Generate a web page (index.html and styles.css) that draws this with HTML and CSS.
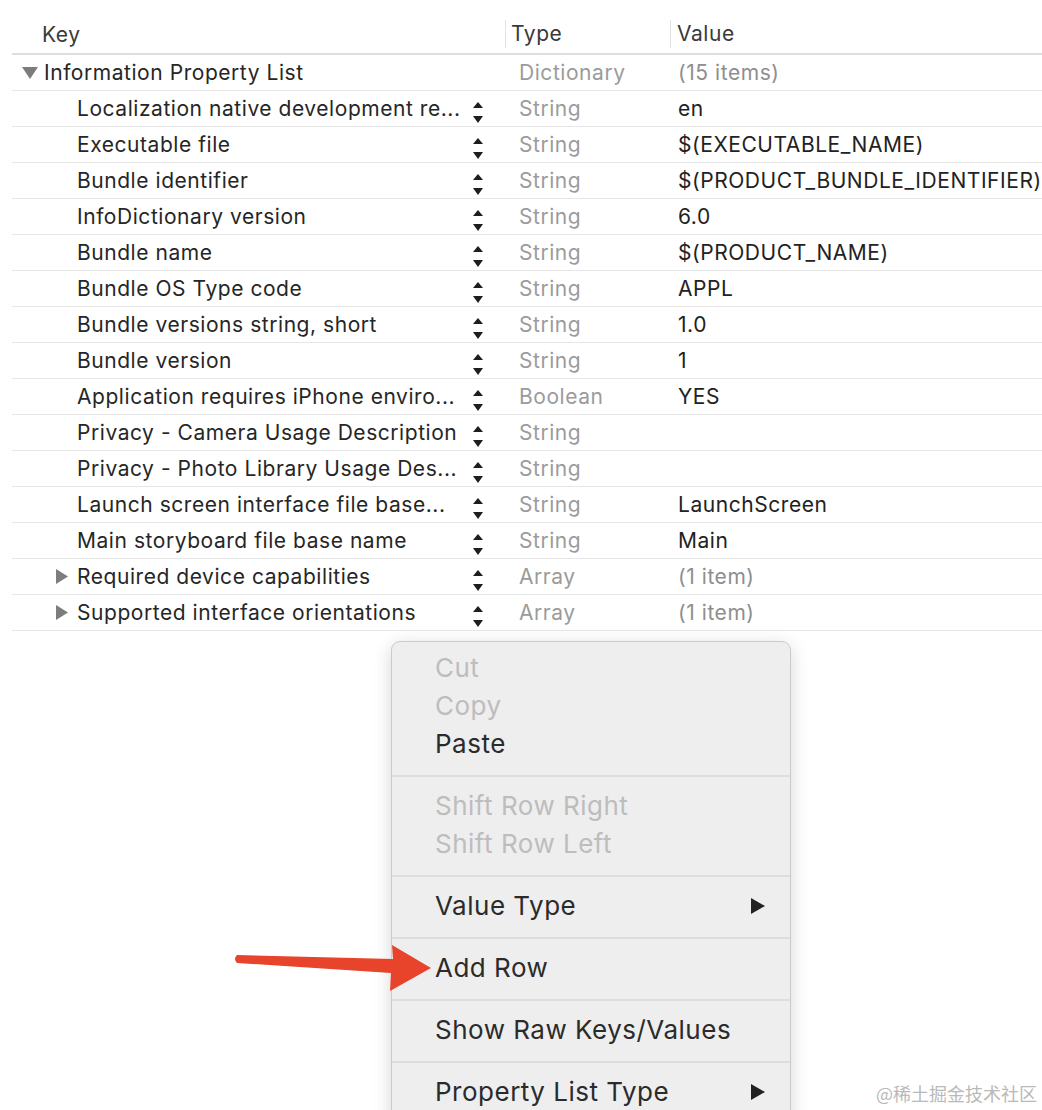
FILE: index.html
```html
<!DOCTYPE html>
<html lang="en">
<head>
    <meta charset="UTF-8">
    <meta name="viewport" content="width=device-width, initial-scale=1.0">
    <title>Info.plist</title>
    <link rel="stylesheet" href="styles.css">
</head>
<body>
    <div class="plist">
        <div class="plist-header">
            <div class="col-key">Key</div>
            <div class="col-type">Type</div>
            <div class="col-value">Value</div>
        </div>

        <div class="row">
            <div class="cell-key level-0">
                <svg class="disclosure down" width="16" height="12" viewBox="0 0 16 12"><polygon points="0,0 16,0 8,12"/></svg>
                <span class="name">Information Property List</span>
            </div>
            <div class="cell-type">Dictionary</div>
            <div class="cell-value muted">(15 items)</div>
        </div>

        <div class="row">
            <div class="cell-key level-1"><span class="name">Localization native development re...</span><span class="stepper"></span></div>
            <div class="cell-type">String</div>
            <div class="cell-value">en</div>
        </div>
        <div class="row">
            <div class="cell-key level-1"><span class="name">Executable file</span><span class="stepper"></span></div>
            <div class="cell-type">String</div>
            <div class="cell-value">$(EXECUTABLE_NAME)</div>
        </div>
        <div class="row">
            <div class="cell-key level-1"><span class="name">Bundle identifier</span><span class="stepper"></span></div>
            <div class="cell-type">String</div>
            <div class="cell-value">$(PRODUCT_BUNDLE_IDENTIFIER)</div>
        </div>
        <div class="row">
            <div class="cell-key level-1"><span class="name">InfoDictionary version</span><span class="stepper"></span></div>
            <div class="cell-type">String</div>
            <div class="cell-value">6.0</div>
        </div>
        <div class="row">
            <div class="cell-key level-1"><span class="name">Bundle name</span><span class="stepper"></span></div>
            <div class="cell-type">String</div>
            <div class="cell-value">$(PRODUCT_NAME)</div>
        </div>
        <div class="row">
            <div class="cell-key level-1"><span class="name">Bundle OS Type code</span><span class="stepper"></span></div>
            <div class="cell-type">String</div>
            <div class="cell-value">APPL</div>
        </div>
        <div class="row">
            <div class="cell-key level-1"><span class="name">Bundle versions string, short</span><span class="stepper"></span></div>
            <div class="cell-type">String</div>
            <div class="cell-value">1.0</div>
        </div>
        <div class="row">
            <div class="cell-key level-1"><span class="name">Bundle version</span><span class="stepper"></span></div>
            <div class="cell-type">String</div>
            <div class="cell-value">1</div>
        </div>
        <div class="row">
            <div class="cell-key level-1"><span class="name">Application requires iPhone enviro...</span><span class="stepper"></span></div>
            <div class="cell-type">Boolean</div>
            <div class="cell-value">YES</div>
        </div>
        <div class="row">
            <div class="cell-key level-1"><span class="name">Privacy - Camera Usage Description</span><span class="stepper"></span></div>
            <div class="cell-type">String</div>
            <div class="cell-value"></div>
        </div>
        <div class="row">
            <div class="cell-key level-1"><span class="name">Privacy - Photo Library Usage Des...</span><span class="stepper"></span></div>
            <div class="cell-type">String</div>
            <div class="cell-value"></div>
        </div>
        <div class="row">
            <div class="cell-key level-1"><span class="name">Launch screen interface file base...</span><span class="stepper"></span></div>
            <div class="cell-type">String</div>
            <div class="cell-value">LaunchScreen</div>
        </div>
        <div class="row">
            <div class="cell-key level-1"><span class="name">Main storyboard file base name</span><span class="stepper"></span></div>
            <div class="cell-type">String</div>
            <div class="cell-value">Main</div>
        </div>
        <div class="row">
            <div class="cell-key level-1 has-children">
                <svg class="disclosure right" width="12" height="15" viewBox="0 0 12 15"><polygon points="0,0 12,7.5 0,15"/></svg>
                <span class="name">Required device capabilities</span><span class="stepper"></span>
            </div>
            <div class="cell-type">Array</div>
            <div class="cell-value muted">(1 item)</div>
        </div>
        <div class="row">
            <div class="cell-key level-1 has-children">
                <svg class="disclosure right" width="12" height="15" viewBox="0 0 12 15"><polygon points="0,0 12,7.5 0,15"/></svg>
                <span class="name">Supported interface orientations</span><span class="stepper"></span>
            </div>
            <div class="cell-type">Array</div>
            <div class="cell-value muted">(1 item)</div>
        </div>
    </div>

    <!-- context menu -->
    <div class="menu">
        <div class="menu-group first">
            <div class="menu-item disabled">Cut</div>
            <div class="menu-item disabled">Copy</div>
            <div class="menu-item">Paste</div>
        </div>
        <div class="menu-group">
            <div class="menu-item disabled">Shift Row Right</div>
            <div class="menu-item disabled">Shift Row Left</div>
        </div>
        <div class="menu-group">
            <div class="menu-item">Value Type <span class="submenu"></span></div>
        </div>
        <div class="menu-group">
            <div class="menu-item">Add Row</div>
        </div>
        <div class="menu-group">
            <div class="menu-item">Show Raw Keys/Values</div>
        </div>
        <div class="menu-group">
            <div class="menu-item">Property List Type <span class="submenu"></span></div>
        </div>
    </div>

    <svg class="callout-arrow" width="200" height="50" viewBox="0 0 200 50">
        <path d="M4,12 L160,16 L159,2 L198,25 L157,48 L158,30 L4,20 Q0,16 4,12 Z"/>
    </svg>

    <div class="watermark">@稀土掘金技术社区</div>
</body>
</html>
```

FILE: styles.css
```css
* {
    box-sizing: border-box;
    margin: 0;
    padding: 0;
}

body {
    position: relative;
    height: 1110px;
    overflow: hidden;
    font-family: Inter, "Liberation Sans", Arial, sans-serif;
    font-size: 21px;
    letter-spacing: 0.55px;
    background-color: #FFFFFF;
    color: #262626;
}

.plist {
    margin-left: 12px;
    padding-top: 12px;
}

.plist-header,
.row {
    display: grid;
    grid-template-columns: 493px 165px 1fr;
    align-items: center;
}

.plist-header {
    height: 43px;
    padding-top: 3px;
    border-bottom: 2px solid #dedede;
    color: #3a3a3a;
}

.plist-header .col-key {
    padding-left: 30px;
}

.plist-header .col-type,
.plist-header .col-value {
    padding-left: 5px;
    border-left: 1px solid #e2e2e2;
    line-height: 28px;
}

.plist-header .col-value {
    padding-left: 6px;
}

.row {
    height: 36px;
    border-bottom: 1px solid #e6e6e6;
}

.cell-key {
    display: flex;
    align-items: center;
    padding-right: 22px;
    white-space: nowrap;
    overflow: hidden;
}

.cell-key .name {
    flex: 1;
}

.level-0 {
    padding-left: 10px;
}

.level-0 .disclosure {
    margin-right: 6px;
    margin-top: 1px;
}

.level-1 {
    padding-left: 65px;
}

.level-1.has-children {
    padding-left: 44px;
}

.level-1.has-children .disclosure {
    margin-right: 9px;
}

.disclosure {
    fill: #7d7d7d;
    flex-shrink: 0;
}

.stepper {
    position: relative;
    width: 10px;
    height: 36px;
    flex-shrink: 0;
}

.stepper::before,
.stepper::after {
    content: "";
    position: absolute;
    left: 0;
    border-left: 5px solid transparent;
    border-right: 5px solid transparent;
}

.stepper::before {
    top: 11px;
    border-bottom: 6px solid #1e1e1e;
}

.stepper::after {
    top: 25px;
    border-top: 7px solid #1e1e1e;
}

.cell-type {
    padding-left: 14px;
    color: #9b9b9b;
}

.cell-value {
    padding-left: 8px;
    white-space: nowrap;
    color: #222222;
}

.cell-value.muted {
    color: #8e8e8e;
}

.menu {
    position: absolute;
    left: 391px;
    top: 641px;
    width: 400px;
    height: 520px;
    padding-top: 7px;
    background-color: #EEEEEE;
    border: 1px solid #cbcbcb;
    border-radius: 9px;
    box-shadow: 0 4px 18px rgba(0, 0, 0, 0.16);
    font-size: 26px;
    letter-spacing: 0.5px;
    color: #2b2b2b;
}

.menu-group {
    padding: 10px 0 12px;
    border-top: 2px solid #dddddd;
}

.menu-group.first {
    padding-top: 0;
    border-top: none;
}

.menu-item {
    position: relative;
    height: 38px;
    line-height: 38px;
    padding-left: 43px;
}

.menu-item.disabled {
    color: #bdbdbd;
}

.submenu {
    position: absolute;
    right: 25px;
    top: 11px;
    border-top: 8px solid transparent;
    border-bottom: 8px solid transparent;
    border-left: 14px solid #222222;
}

.callout-arrow {
    position: absolute;
    left: 233px;
    top: 943px;
    fill: #e8432b;
}

.watermark {
    position: absolute;
    left: 876px;
    top: 1080px;
    font-family: "Noto Sans CJK SC", sans-serif;
    font-size: 18px;
    letter-spacing: 0;
    color: #b9b9b9;
}
```
